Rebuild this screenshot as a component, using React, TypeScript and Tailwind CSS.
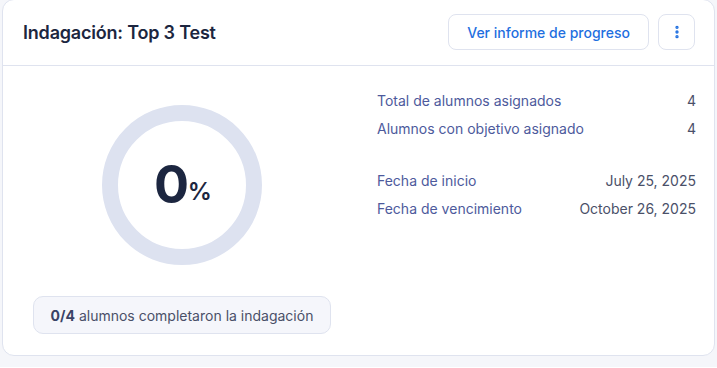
import { MoreVertical } from 'lucide-react';

const stats = [
  { label: 'Total de alumnos asignados', value: '4' },
  { label: 'Alumnos con objetivo asignado', value: '4' },
];

const dates = [
  { label: 'Fecha de inicio', value: 'July 25, 2025' },
  { label: 'Fecha de vencimiento', value: 'October 26, 2025' },
];

function ProgressRing({ percent }: { percent: number }) {
  const r = 72;
  const c = 2 * Math.PI * r;
  return (
    <div className="relative w-[160px] h-[160px]">
      <svg width="160" height="160" viewBox="0 0 160 160">
        <circle cx="80" cy="80" r={r} fill="none" stroke="#dde2f0" strokeWidth="16" />
        <circle
          cx="80"
          cy="80"
          r={r}
          fill="none"
          stroke="#3b6ff5"
          strokeWidth="16"
          strokeDasharray={c}
          strokeDashoffset={c - (c * percent) / 100}
          transform="rotate(-90 80 80)"
          opacity={percent > 0 ? 1 : 0}
        />
      </svg>
      <div className="absolute inset-0 flex items-center justify-center pl-[2px]">
        <span className="text-[52px] leading-none font-bold text-[#1c2640] tracking-tight">{percent}</span>
        <span className="text-[24px] leading-none font-semibold text-[#1c2640] mt-[14px]">%</span>
      </div>
    </div>
  );
}

function Row({ label, value }: { label: string; value: string }) {
  return (
    <div className="flex items-center justify-between h-[28px] text-[14px]">
      <span className="text-[#4d5a9c]">{label}</span>
      <span className="text-[#4a5068]">{value}</span>
    </div>
  );
}

export default function App() {
  return (
    <div className="min-h-screen bg-[#f5f6fa] px-[2px]" style={{ fontFamily: 'Inter, "Noto Sans", sans-serif' }}>
      <div className="w-[713px] h-[357px] bg-white border border-[#dfe3ef] rounded-[12px] -mt-[1px] flex flex-col">
        <div className="h-[66px] flex items-center justify-between pl-[20px] pr-[19px] border-b border-[#dfe3ef] shrink-0">
          <h1 className="text-[18px] font-semibold text-[#1c2640] tracking-[-0.2px]">Indagación: Top 3 Test</h1>
          <div className="flex items-center gap-[9px] mt-[-1px]">
            <button className="h-[36px] px-[18px] rounded-[8px] border border-[#dfe3ef] text-[14px] font-medium text-[#1f6fe0]">
              Ver informe de progreso
            </button>
            <button className="h-[36px] w-[37px] rounded-[8px] border border-[#dfe3ef] flex items-center justify-center text-[#1f6fe0]">
              <MoreVertical className="w-[16px] h-[16px]" strokeWidth={3} />
            </button>
          </div>
        </div>
        <div className="flex flex-1">
          <div className="w-[358px] flex flex-col items-center pt-[39px]">
            <ProgressRing percent={0} />
            <div className="mt-[31px] h-[38px] px-[17px] rounded-[10px] border border-[#dfe3ef] bg-[#f5f6fb] flex items-center text-[14px] text-[#4a5068]">
              <span className="font-bold text-[#3a4266] mr-[4px]">0/4</span>
              alumnos completaron la indagación
            </div>
          </div>
          <div className="flex-1 pt-[20px] pl-[16px] pr-[18px]">
            {stats.map((s) => (
              <Row key={s.label} label={s.label} value={s.value} />
            ))}
            <div className="h-[24px]" />
            {dates.map((d) => (
              <Row key={d.label} label={d.label} value={d.value} />
            ))}
          </div>
        </div>
      </div>
    </div>
  );
}
